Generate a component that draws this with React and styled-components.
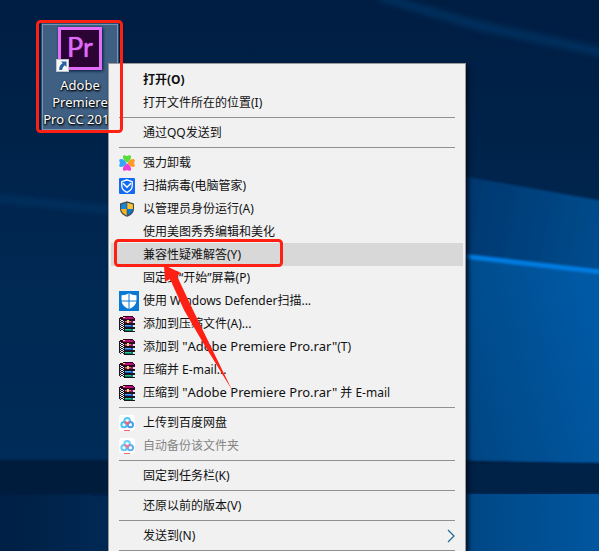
import React from "react";
import styled, { createGlobalStyle } from "styled-components";

const GlobalStyle = createGlobalStyle`
  *, *::before, *::after { box-sizing: border-box; }
  body { margin: 0; overflow: hidden; background: #00214a; }
`;

const Desktop = styled.main`
  position: relative;
  isolation: isolate;
  height: 100vh;
  overflow: hidden;
  font-family: "Noto Sans", "Noto Sans CJK SC", sans-serif;
`;

const WallpaperArt = styled.svg`
  position: absolute;
  z-index: -1;
  inset: 0;
  width: 100%;
  height: 100%;
`;

const Shortcut = styled.button`
  position: absolute;
  left: 42px;
  top: 24px;
  display: flex;
  flex-direction: column;
  align-items: center;
  gap: 7px;
  width: 76px;
  padding: 2px 0 1px;
  border: 1px solid #7892af;
  outline: 1px solid #294c70;
  background: #3f6083;
  color: #fff;
  font: inherit;
  font-size: 13px;
  line-height: 17px;
  text-shadow: 1px 1px 2px #000, 0 1px 2px #000;
`;

const ShortcutIcon = styled.span`
  position: relative;
  display: flex;
  align-items: center;
  justify-content: center;
  width: 44px;
  height: 43px;
  padding-bottom: 4px;
  border: 3px solid #e36cf9;
  background: #2b0434;
  color: #e16bf8;
  box-shadow: 1px 1px 3px #001a3a;
  font-family: "Lato", sans-serif;
  font-size: 27px;
  line-height: 32px;
  text-shadow: 0 0 1px #e16bf8;
`;

const LinkBadge = styled.svg`
  position: absolute;
  left: -5px;
  bottom: -5px;
  width: 13px;
  height: 13px;
`;

const ShortcutLabel = styled.span`
  width: 74px;
  white-space: nowrap;
`;

const Menu = styled.div`
  position: relative;
  width: min(358px, calc(100vw - 112px));
  margin: 63px 0 0 108px;
  padding: 4px 2px;
  border: 1px solid #9b9b9b;
  background: #f1f1f1;
  box-shadow: 3px 3px 4px #000b1ccc;
`;

const Item = styled.button`
  display: grid;
  grid-template-columns: 24px 1fr auto;
  align-items: center;
  width: 100%;
  height: 23px;
  padding: 0 8px;
  border: 0;
  background: ${(p) => (p.$active ? "#d8d8d8" : "transparent")};
  color: ${(p) => (p.disabled ? "#858585" : "#111")};
  font: inherit;
  font-size: 12px;
  font-weight: ${(p) => (p.$strong ? 700 : 400)};
  line-height: 18px;
  text-align: left;
  white-space: nowrap;
`;

const FileName = styled.span`
  font-size: 13px;
`;

const IconSlot = styled.span`
  display: flex;
  align-items: center;
  height: 20px;
`;

const Glyph = styled.svg`
  display: block;
  flex: none;
  width: ${(p) => p.$size || 16}px;
  height: ${(p) => p.$size || 16}px;
`;

const Separator = styled.hr`
  height: 1px;
  margin: 3px 8px;
  border: 0;
  background: #919191;
`;

const Marks = styled.svg`
  position: absolute;
  left: 0;
  top: 0;
  width: 300px;
  height: 400px;
  pointer-events: none;
`;

const Clover = () => (
  <Glyph viewBox="0 0 16 16">
    <path d="M8 7.600C5.500 6.300 3.800 4 3.900 1.800 4 .2 5.400-.1 6.500.5 7.500 1 8.500 1 9.500.5c1.100-.6 2.500-.3 2.600 1.300C12.200 4 10.500 6.300 8 7.600Z" fill="#5add3a" />
    <path d="M8.400 8C9.700 5.500 12 3.800 14.200 3.900c1.600.1 1.900 1.500 1.300 2.600-.5 1-.5 2 0 3 .6 1.100.3 2.500-1.300 2.600C12 12.200 9.700 10.500 8.400 8Z" fill="#ff9b2c" />
    <path d="M8 8.400c2.500 1.300 4.200 3.600 4.100 5.800-.1 1.600-1.500 1.900-2.600 1.300-1-.5-2-.5-3 0-1.100.6-2.500.3-2.600-1.300C3.800 12 5.500 9.700 8 8.400Z" fill="#ee3fd3" />
    <path d="M7.600 8C6.300 10.500 4 12.200 1.800 12.100.2 12-.1 10.600.5 9.500c.5-1 .5-2 0-3C-.1 5.400.2 4 1.800 3.900 4 3.800 6.300 5.500 7.600 8Z" fill="#35a5fb" />
  </Glyph>
);

const Guard = () => (
  <Glyph viewBox="0 0 16 16">
    <rect width="16" height="16" rx="1" fill="#146bf3" />
    <path d="M8 1.800 13.200 3.600V8c0 3-2 5-5.200 6.300C4.800 13 2.800 11 2.800 8V3.600Z" fill="none" stroke="#fff" strokeWidth="1.300" />
    <path d="m4 5.300 4 4 4-4" fill="none" stroke="#fff" strokeWidth="1.500" />
  </Glyph>
);

const AdminShield = () => (
  <Glyph viewBox="0 0 16 16">
    <path d="M8 .3 15 2.600V8c0 3.800-3 6.300-7 7.800C4 14.300 1 11.800 1 8V2.600Z" fill="#454b50" />
    <path d="M7.700 1.700V8H2.100V3.500Z" fill="#1684d8" />
    <path d="M8.300 1.700V8h5.600V3.500Z" fill="#ffc32b" />
    <path d="M2.100 8h5.600v6.500C4.500 13 2.300 11 2.100 8Z" fill="#ffb51c" />
    <path d="M13.900 8H8.300v6.500C11.500 13 13.700 11 13.900 8Z" fill="#0878cd" />
  </Glyph>
);

const Defender = () => (
  <Glyph $size={20} viewBox="0 0 20 20">
    <rect width="20" height="20" fill="#0878d5" />
    <path d="M10 2c2 1.500 4.500 2.200 7.500 2.200V9c0 4.300-3 7.300-7.500 9-4.500-1.700-7.500-4.700-7.500-9V4.200C5.500 4.200 8 3.500 10 2Z" fill="#fff" />
    <path d="M10 2v16M2 10h16" stroke="#0878d5" />
  </Glyph>
);

const Book = ({ y, fill, light }) => (
  <g transform={`translate(0 ${y})`}>
    <path d="M0 0h2l4 2h10v4H5L0 4Z" fill="#1c1420" />
    <path d="M1 1 5 3v1L1 2ZM1 3l4 2v.8L1 4Z" fill="#f3f3f3" />
    <path d="M6 3h10v2H6Z" fill={fill} />
    <path d="M6 3h6v1H6Z" fill={light} />
    <path d="M14 3h2v2h-2Z" fill="#e9e9e9" />
  </g>
);

const Archive = () => (
  <Glyph viewBox="0 0 16 16" shapeRendering="crispEdges">
    <Book y={10} fill="#008660" light="#31c394" />
    <Book y={6} fill="#1b55c8" light="#4ca5ea" />
    <Book y={2} fill="#a3106a" light="#dc6aa8" />
    <path d="M0 2 5 0h9l2 3v1H5Z" fill="#35001f" />
    <path d="M2 2 5 1h8l2 2H5Z" fill="#b5137b" />
    <path d="M4 1h2v1H4ZM8 4h2v3H8Z" fill="#ffe04d" />
  </Glyph>
);

const CloudDisk = ({ faded }) => (
  <Glyph viewBox="0 0 16 16">
    <rect width="16" height="16" rx="3" fill="#fff" />
    <g fill="none" strokeWidth="2" opacity={faded ? 0.85 : 1}>
      <circle cx="8.200" cy="5.800" r="2.800" stroke="#55c7f6" />
      <circle cx="5" cy="9.700" r="2.600" stroke="#42bff8" />
      <circle cx="11.400" cy="9.700" r="2.600" stroke="#459ff1" />
      <path d="M5.600 7.200Q7.200 7 8.200 8.800q1-1.800 2.600-1.600" stroke="#f3647b" />
    </g>
    <path d="M5 15.500h6" stroke="#f4627b" />
  </Glyph>
);

const Chevron = () => (
  <Glyph viewBox="0 0 16 16">
    <path d="m9 2 6 6-6 6" fill="none" stroke="#246a94" strokeWidth="1.300" />
  </Glyph>
);

const archiveName = '"Adobe Premiere Pro.rar"';

const entries = [
  { text: "打开(O)", strong: true },
  { text: "打开文件所在的位置(I)" },
  null,
  { text: "通过QQ发送到" },
  null,
  { text: "强力卸载", icon: <Clover /> },
  { text: "扫描病毒(电脑管家)", icon: <Guard /> },
  { text: "以管理员身份运行(A)", icon: <AdminShield /> },
  { text: "使用美图秀秀编辑和美化" },
  { text: "兼容性疑难解答(Y)", active: true },
  { text: "固定到“开始”屏幕(P)" },
  { text: "使用 Windows Defender扫描...", icon: <Defender /> },
  { text: "添加到压缩文件(A)...", icon: <Archive /> },
  { text: "添加到 ", file: archiveName, after: "(T)", icon: <Archive /> },
  { text: "压缩并 E-mail...", icon: <Archive /> },
  { text: "压缩到 ", file: archiveName, after: " 并 E-mail", icon: <Archive /> },
  null,
  { text: "上传到百度网盘", icon: <CloudDisk /> },
  { text: "自动备份该文件夹", icon: <CloudDisk faded />, disabled: true },
  null,
  { text: "固定到任务栏(K)" },
  null,
  { text: "还原以前的版本(V)" },
  null,
  { text: "发送到(N)", submenu: true },
  null,
];

const Wallpaper = () => (
  <WallpaperArt viewBox="0 0 599 551" preserveAspectRatio="none" aria-hidden="true">
    <defs>
      <linearGradient id="sky" x1="0" y1="0" x2="0" y2="1">
        <stop offset="0" stopColor="#001d42" />
        <stop offset=".5" stopColor="#002852" />
        <stop offset="1" stopColor="#002e5c" />
      </linearGradient>
      <linearGradient id="beam" gradientUnits="userSpaceOnUse" x1="440" y1="200" x2="599" y2="230">
        <stop offset="0" stopColor="#00346a" />
        <stop offset="1" stopColor="#004b8c" />
      </linearGradient>
      <linearGradient id="pane" gradientUnits="userSpaceOnUse" x1="440" y1="400" x2="599" y2="360">
        <stop offset="0" stopColor="#00447f" />
        <stop offset="1" stopColor="#0059a4" />
      </linearGradient>
      <linearGradient id="low" gradientUnits="userSpaceOnUse" x1="0" y1="0" x2="599" y2="0">
        <stop offset="0" stopColor="#001f44" />
        <stop offset=".2" stopColor="#002a56" />
        <stop offset=".75" stopColor="#004581" />
        <stop offset="1" stopColor="#00569f" />
      </linearGradient>
      <filter id="soft" x="-20%" y="-50%" width="140%" height="200%">
        <feGaussianBlur stdDeviation="3" />
      </filter>
      <filter id="edge" x="-10%" y="-20%" width="120%" height="140%">
        <feGaussianBlur stdDeviation="1" />
      </filter>
    </defs>
    <rect width="599" height="551" fill="url(#sky)" />
    <path d="m-5 198 125 13" stroke="#00386c" strokeWidth="4" filter="url(#soft)" />
    <path d="M380-3 480 26 610 54" fill="none" stroke="#003360" strokeWidth="8" filter="url(#soft)" />
    <path d="M400 165 620 204V286L400 250Z" fill="url(#beam)" filter="url(#edge)" />
    <path d="M400 248 620 273V470H400Z" fill="url(#pane)" />
    <path d="m400 249 220 25" stroke="#007be0" strokeWidth="5" filter="url(#edge)" />
    <rect x="-10" y="494" width="620" height="70" fill="url(#low)" />
    <path d="M-10 460H430l180 4v28l-180 1-440 2Z" fill="#001b3d" filter="url(#edge)" />
    <path d="M400 463.500h220v28H400Z" fill="#002147" filter="url(#edge)" />
  </WallpaperArt>
);

export default function App() {
  return (
    <Desktop>
      <GlobalStyle />
      <Wallpaper />
      <Shortcut type="button">
        <ShortcutIcon>
          Pr
          <LinkBadge viewBox="0 0 13 13" aria-hidden="true">
            <rect x=".5" y=".5" width="12" height="12" fill="#f7f7f7" stroke="#bfc5cc" />
            <path d="M5 2.500h5.500V8L8.700 6.200Q6.200 8 6 11H3.300Q2.700 6.500 6.700 4.200Z" fill="#2660a4" />
          </LinkBadge>
        </ShortcutIcon>
        <ShortcutLabel>
          Adobe
          <br />
          Premiere
          <br />
          Pro CC 2018
        </ShortcutLabel>
      </Shortcut>
      <Menu role="menu">
        {entries.map((entry, i) =>
          entry ? (
            <Item
              key={i}
              type="button"
              role="menuitem"
              disabled={entry.disabled}
              aria-haspopup={entry.submenu ? "menu" : undefined}
              $active={entry.active}
              $strong={entry.strong}
            >
              <IconSlot aria-hidden="true">{entry.icon}</IconSlot>
              <span>
                {entry.text}
                {entry.file && <FileName>{entry.file}</FileName>}
                {entry.after}
              </span>
              {entry.submenu && <Chevron />}
            </Item>
          ) : (
            <Separator key={i} />
          )
        )}
      </Menu>
      <Marks viewBox="0 0 300 400" aria-hidden="true">
        <g fill="none" stroke="#fe2013" strokeWidth="3">
          <rect x="37.500" y="21.500" width="84" height="110" rx="3" />
          <rect x="115.500" y="240.500" width="166" height="25" rx="3" />
        </g>
        <path d="M164 265 181 273 177 276 193 310 232 390 202 341 184 310 170 279 165 282Z" fill="#fe2013" />
      </Marks>
    </Desktop>
  );
}
